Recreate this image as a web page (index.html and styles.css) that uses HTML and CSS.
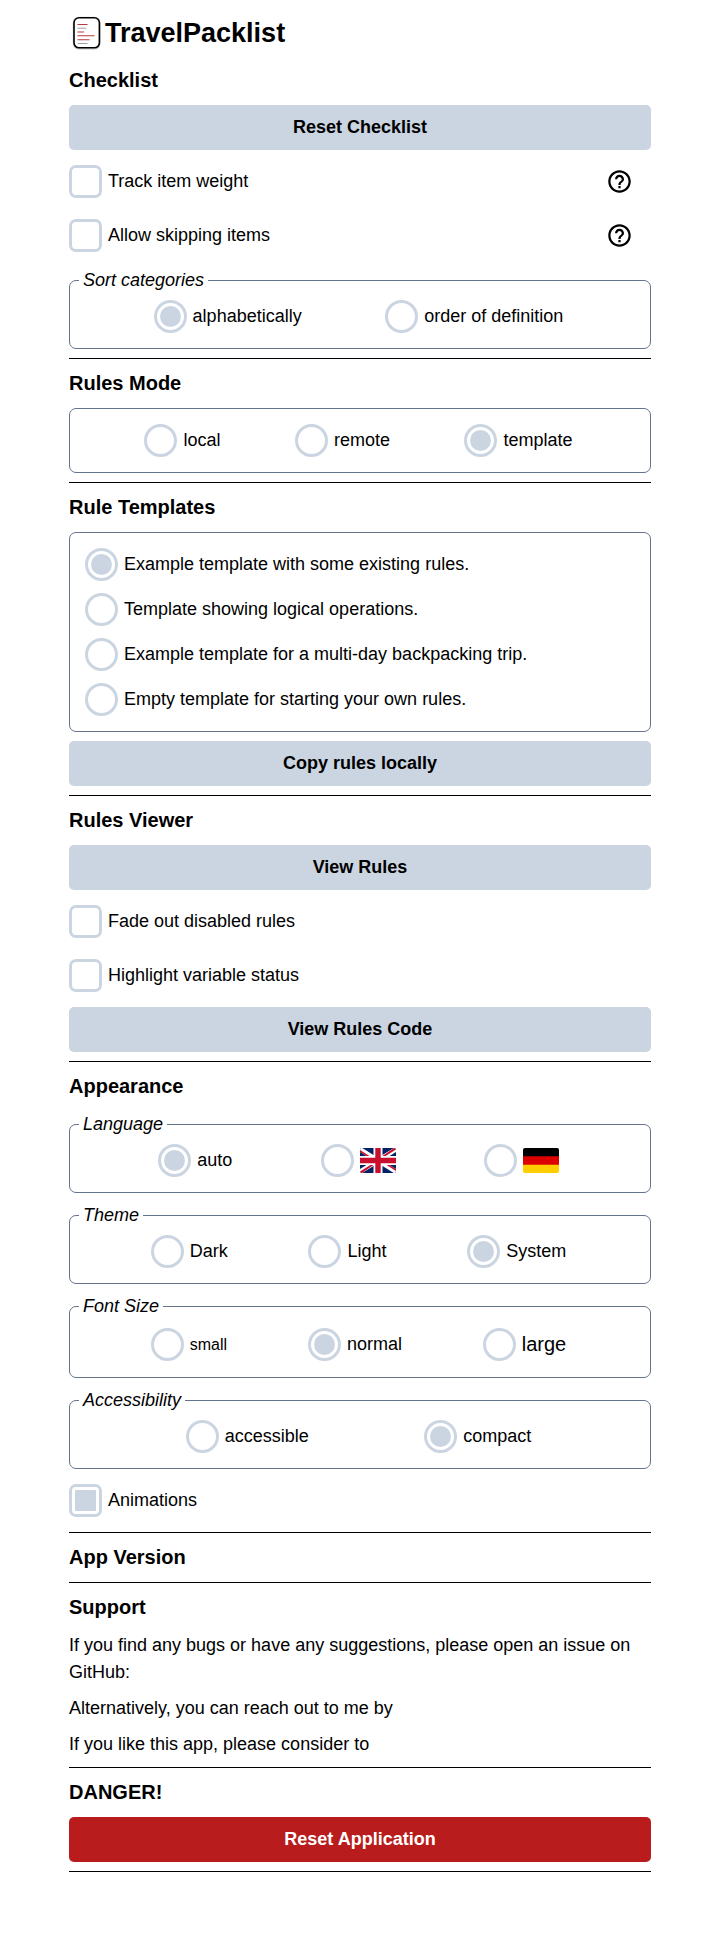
FILE: index.html
```html
<!DOCTYPE html>
<html lang="en">
<head>
<meta charset="utf-8">
<meta name="viewport" content="width=device-width, initial-scale=1">
<title>TravelPacklist</title>
<link rel="stylesheet" href="styles.css">
</head>
<body>
<svg class="sprite" aria-hidden="true">
  <symbol id="help" viewBox="0 0 24 24">
    <path d="M11 18h2v-2h-2v2zm1-16C6.480 2 2 6.480 2 12s4.480 10 10 10 10-4.480 10-10S17.520 2 12 2zm0 18c-4.410 0-8-3.590-8-8s3.590-8 8-8 8 3.590 8 8-3.590 8-8 8zm0-14c-2.210 0-4 1.790-4 4h2c0-1.100.9-2 2-2s2 .9 2 2c0 2-3 1.750-3 5h2c0-2.250 3-2.500 3-5 0-2.210-1.790-4-4-4z"/>
  </symbol>
</svg>
<main class="page">
  <header class="header">
    <svg class="logo" viewBox="0 0 36 36" aria-hidden="true">
      <rect x="3.700" y="1.700" width="28" height="33" rx="6" fill="#bbb" opacity=".6"/>
      <rect x="5" y="2.800" width="25.400" height="30" rx="5" fill="#fff" stroke="#000" stroke-width="1.600"/>
      <g fill="none" stroke-width="1.100">
        <path stroke="#b83a3a" d="M8.500 9.500h10M8.500 17h6.500M8.500 20.700h17M8.500 24.700h12"/>
        <path stroke="#888" stroke-width=".8" d="M8.500 13.200h9M8.500 28.500h10"/>
      </g>
    </svg>
    <h1 class="title">TravelPacklist</h1>
  </header>

  <section class="section">
    <h2 class="heading">Checklist</h2>
    <button class="button" type="button">Reset Checklist</button>
    <div class="row">
      <label class="check"><input class="box" type="checkbox">Track item weight</label>
      <button class="help" type="button" aria-label="Help: track item weight"><svg class="help-icon"><use href="#help"/></svg></button>
    </div>
    <div class="row">
      <label class="check"><input class="box" type="checkbox">Allow skipping items</label>
      <button class="help" type="button" aria-label="Help: allow skipping items"><svg class="help-icon"><use href="#help"/></svg></button>
    </div>
    <fieldset class="group titled">
      <legend class="legend">Sort categories</legend>
      <div class="options">
        <label class="option"><input class="box round" type="radio" name="sort" checked>alphabetically</label>
        <label class="option"><input class="box round" type="radio" name="sort">order of definition</label>
      </div>
    </fieldset>
  </section>

  <section class="section">
    <h2 class="heading">Rules Mode</h2>
    <fieldset class="group" aria-label="Rules Mode">
      <div class="options">
        <label class="option"><input class="box round" type="radio" name="mode">local</label>
        <label class="option"><input class="box round" type="radio" name="mode">remote</label>
        <label class="option"><input class="box round" type="radio" name="mode" checked>template</label>
      </div>
    </fieldset>
  </section>

  <section class="section">
    <h2 class="heading">Rule Templates</h2>
    <fieldset class="group" aria-label="Rule Templates">
      <div class="options stacked">
        <label class="option"><input class="box round" type="radio" name="template" checked>Example template with some existing rules.</label>
        <label class="option"><input class="box round" type="radio" name="template">Template showing logical operations.</label>
        <label class="option"><input class="box round" type="radio" name="template">Example template for a multi-day backpacking trip.</label>
        <label class="option"><input class="box round" type="radio" name="template">Empty template for starting your own rules.</label>
      </div>
    </fieldset>
    <button class="button" type="button">Copy rules locally</button>
  </section>

  <section class="section">
    <h2 class="heading">Rules Viewer</h2>
    <button class="button" type="button">View Rules</button>
    <div class="row"><label class="check"><input class="box" type="checkbox">Fade out disabled rules</label></div>
    <div class="row"><label class="check"><input class="box" type="checkbox">Highlight variable status</label></div>
    <button class="button" type="button">View Rules Code</button>
  </section>

  <section class="section">
    <h2 class="heading">Appearance</h2>
    <fieldset class="group titled">
      <legend class="legend">Language</legend>
      <div class="options">
        <label class="option"><input class="box round" type="radio" name="language" checked>auto</label>
        <label class="option"><input class="box round" type="radio" name="language" aria-label="English">
          <svg class="flag" viewBox="0 0 36 25" aria-hidden="true">
            <path fill="#012169" d="M0 0h36v25H0z"/>
            <path stroke="#fff" stroke-width="4.500" d="M-2 0l40 25M38 0L-2 25"/>
            <path fill="#c8102e" d="M0 2l11 7h-3L0 4zM36 23l-11-7h3l8 5zM36 1.500L24 9h-3L34 0h2zM0 23.500L12 16h3L2 25H0z"/>
            <path stroke="#fff" stroke-width="9" d="M18 0v25M0 12.500h36"/>
            <path stroke="#c8102e" stroke-width="5.400" d="M18 0v25M0 12.500h36"/>
          </svg>
        </label>
        <label class="option"><input class="box round" type="radio" name="language" aria-label="German">
          <svg class="flag" viewBox="0 0 36 25" aria-hidden="true">
            <path d="M0 0h36v9H0z"/>
            <path fill="#d00" d="M0 8.300h36V17H0z"/>
            <path fill="#ffce00" d="M0 16.700h36V25H0z"/>
          </svg>
        </label>
      </div>
    </fieldset>
    <fieldset class="group titled">
      <legend class="legend">Theme</legend>
      <div class="options">
        <label class="option"><input class="box round" type="radio" name="theme">Dark</label>
        <label class="option"><input class="box round" type="radio" name="theme">Light</label>
        <label class="option"><input class="box round" type="radio" name="theme" checked>System</label>
      </div>
    </fieldset>
    <fieldset class="group titled">
      <legend class="legend">Font Size</legend>
      <div class="options sizes">
        <label class="option small"><input class="box round" type="radio" name="size">small</label>
        <label class="option"><input class="box round" type="radio" name="size" checked>normal</label>
        <label class="option large"><input class="box round" type="radio" name="size">large</label>
      </div>
    </fieldset>
    <fieldset class="group titled">
      <legend class="legend">Accessibility</legend>
      <div class="options">
        <label class="option"><input class="box round" type="radio" name="density">accessible</label>
        <label class="option"><input class="box round" type="radio" name="density" checked>compact</label>
      </div>
    </fieldset>
    <div class="row"><label class="check"><input class="box" type="checkbox" checked>Animations</label></div>
  </section>

  <section class="section">
    <h2 class="heading">App Version</h2>
  </section>

  <section class="section">
    <h2 class="heading">Support</h2>
    <p class="text">If you find any bugs or have any suggestions, please open an issue on GitHub:</p>
    <p class="text">Alternatively, you can reach out to me by</p>
    <p class="text">If you like this app, please consider to</p>
  </section>

  <section class="section">
    <h2 class="heading">DANGER!</h2>
    <button class="button danger" type="button">Reset Application</button>
  </section>
</main>
</body>
</html>
```
FILE: styles.css
```css
:root {
  --control: #cbd5e1;
  --outline: #64748b;
}

* {
  box-sizing: border-box;
}

body {
  margin: 0;
  background: #fff;
  color: #000;
  font: 18px/27px "Liberation Sans", Arial, sans-serif;
}

.sprite {
  display: none;
}

.page {
  padding: 10px 69px 72px;
}

.header {
  display: flex;
  align-items: center;
}

.logo {
  width: 36px;
  height: 36px;
}

.title {
  margin: 0;
  font-size: 27px;
  line-height: 46px;
}

.section {
  display: flex;
  flex-direction: column;
  gap: 9px;
  padding: 9px 0;
  border-bottom: 1px solid #000;
}

.heading {
  margin: 0;
  font-size: 20px;
  line-height: 31px;
}

.button {
  padding: 9px;
  border: 0;
  border-radius: 5px;
  background: var(--control);
  color: #000;
  font: inherit;
  font-weight: bold;
  cursor: pointer;
}

.danger {
  background: #b91c1c;
  color: #fff;
}

.row {
  display: flex;
  align-items: center;
  justify-content: space-between;
  min-height: 45px;
}

.check,
.option {
  display: flex;
  align-items: center;
  gap: 6px;
  cursor: pointer;
}

.option {
  padding: 6px 9px 6px 6px;
}

.box {
  appearance: none;
  flex: none;
  width: 33px;
  height: 33px;
  margin: 0;
  padding: 3px;
  border: 3px solid var(--control);
  border-radius: 7px;
}

.box:checked {
  background: var(--control) content-box;
}

.round,
.round:checked {
  border-radius: 50%;
}

.help {
  padding: 9px 18px;
  border: 0;
  background: none;
  color: inherit;
  cursor: pointer;
}

.help-icon {
  display: block;
  width: 27px;
  height: 27px;
}

.group {
  min-width: 0;
  margin: 0;
  padding: 9px;
  border: 1px solid var(--outline);
  border-radius: 7px;
}

.titled {
  padding-top: 0;
}

.legend {
  padding: 0 4px;
  font-style: italic;
}

.options {
  display: flex;
  flex-wrap: wrap;
  align-items: center;
  justify-content: space-evenly;
}

.stacked {
  flex-direction: column;
  align-items: flex-start;
}

.sizes {
  min-height: 48px;
}

.small {
  font-size: 16px;
}

.large {
  font-size: 20px;
}

.flag {
  width: 36px;
  height: 25px;
  border-radius: 2px;
}

.text {
  margin: 0;
}

@media (max-width: 600px) {
  .page {
    padding-inline: 18px;
  }
}
```
